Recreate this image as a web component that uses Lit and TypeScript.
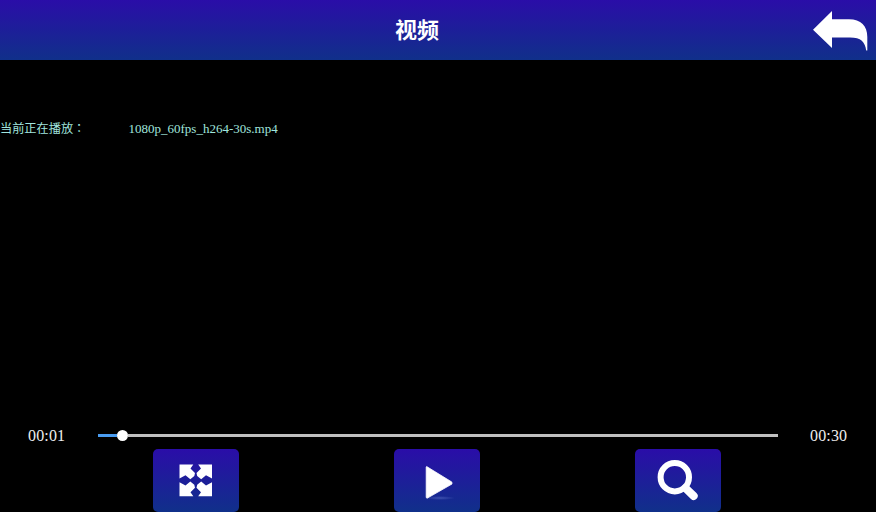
import { LitElement, html, css, svg } from "lit";
import { customElement, property } from "lit/decorators.js";

const icons = {
  expand: svg`<g fill="#fff">
    <path d="M26.5 15.5H40.3L37.5 19.5L42 24L41.3 27L37.3 30.2L32.5 26.2L26.5 29.5Z"/>
    <path d="M59 15.5H45.2L48 19.5L43.5 24L44.2 27L48.2 30.2L53 26.2L59 29.5Z"/>
    <path d="M26.5 47.2H40.3L37.5 43.2L42 38.7L41.3 35.7L37.3 32.5L32.5 36.5L26.5 33.2Z"/>
    <path d="M59 47.2H45.2L48 43.2L43.5 38.7L44.2 35.7L48.2 32.5L53 36.5L59 33.2Z"/>
  </g>`,
  play: svg`<defs><radialGradient id="g"><stop offset="0" stop-color="#8a9be8" stop-opacity=".35"/><stop offset="1" stop-color="#8a9be8" stop-opacity="0"/></radialGradient></defs>
    <ellipse cx="46" cy="49" rx="15" ry="2" fill="url(#g)"/>
    <path d="M32.6 17.5L57.8 33L58 35L33 49.3L32.2 48.5V18Z" fill="#fff" stroke="#fff" stroke-width=".8" stroke-linejoin="round"/>`,
  search: svg`<g fill="none" stroke="#fff"><circle cx="39.8" cy="28.2" r="14.2" stroke-width="6"/><path d="M50.5 39.2L58.7 47" stroke-width="8" stroke-linecap="round"/></g>`,
};

@customElement("tool-button")
class ToolButton extends LitElement {
  @property() icon: keyof typeof icons = "play";
  static styles = css`
    :host { display: block; width: 86px; height: 63px; }
    .button {
      display: block; width: 86px; height: 63px; padding: 0; border: 0;
      border-radius: 5px; overflow: hidden;
      background: linear-gradient(#2a0da8, #10308a);
    }
    svg { display: block; }
  `;
  render() {
    return html`<button class="button" aria-label=${this.icon}>
      <svg width="86" height="63" viewBox="0 0 86 63">${icons[this.icon]}</svg>
    </button>`;
  }
}

@customElement("app-root")
class AppRoot extends LitElement {
  static styles = css`
    :host {
      display: flex; flex-direction: column; width: 876px; height: 512px;
      overflow: hidden; background: #000; color: #fff;
      font-family: "Liberation Serif", "Noto Sans CJK SC", serif;
    }
    .header {
      display: grid; grid-template-columns: 22px 1fr 64px; align-items: center;
      height: 60px; flex: none; background: linear-gradient(#2a0da8, #10308a);
    }
    .title {
      grid-column: 2; margin: 0; text-align: center; height: 60px;
      font: 700 22px/57px "Noto Sans CJK SC", sans-serif;
    }
    .back { display: block; }
    .stage { flex: 1; padding-top: 58px; }
    .now { display: flex; align-items: center; height: 20px; color: #a0e5de; white-space: nowrap; }
    .label { width: 128.5px; font: 12.2px/20px "Noto Sans CJK TC", sans-serif; }
    .file { font-size: 13px; padding-top: 1px; }
    .progress { display: flex; align-items: center; height: 26px; flex: none; }
    .time { font-size: 16px; line-height: 26px; width: 70px; padding: 2px 0 0 28px; color: #eee; letter-spacing: 0.15px; }
    .total { padding-left: 32px; width: 66px; }
    .track { display: flex; align-items: center; width: 680px; flex: none; }
    .played { width: 19px; height: 3px; background: #4a9cf0; }
    .knob { width: 11px; height: 11px; border-radius: 50%; background: #fff; }
    .rest { flex: 1; height: 3px; background: #c0c0c0; }
    .tools { display: flex; gap: 155.2px; padding: 1px 0 0 153px; height: 63px; flex: none; }
  `;
  render() {
    return html`
      <header class="header">
        <h1 class="title">视频</h1>
        <svg class="back" width="64" height="60" viewBox="0 0 64 60">
          <path d="M1 29.7L20 11V19.3H37C49 19.3 55.3 26 55.3 37V50.5H54.2C53.2 42 49 37.5 38 37.5H20V48Z" fill="#fff"/>
        </svg>
      </header>
      <main class="stage">
        <div class="now"><span class="label" lang="zh-Hant">当前正在播放：</span><span class="file">1080p_60fps_h264-30s.mp4</span></div>
      </main>
      <div class="progress">
        <span class="time">00:01</span>
        <div class="track"><div class="played"></div><div class="knob"></div><div class="rest"></div></div>
        <span class="time total">00:30</span>
      </div>
      <footer class="tools">
        <tool-button icon="expand"></tool-button>
        <tool-button icon="play"></tool-button>
        <tool-button icon="search"></tool-button>
      </footer>`;
  }
}
